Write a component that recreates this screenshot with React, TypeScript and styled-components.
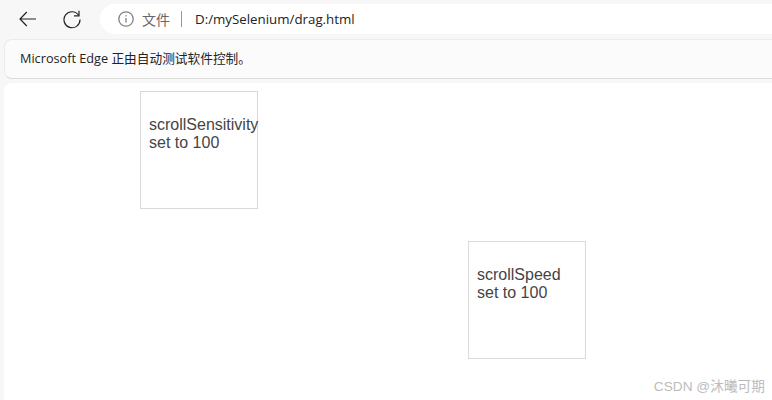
import styled, { createGlobalStyle } from 'styled-components';

const GlobalStyle = createGlobalStyle`
  html, body {
    margin: 0;
    padding: 0;
    height: 100%;
    overflow: hidden;
    background: #f7f7f7;
  }
`;

const Window = styled.div`
  width: 772px;
  height: 400px;
  display: flex;
  flex-direction: column;
  background: #f7f7f7;
  font-family: "Segoe UI", "Open Sans", "Noto Sans CJK SC", sans-serif;
`;

const Toolbar = styled.div`
  height: 38px;
  flex: none;
  display: flex;
  align-items: center;
  padding-left: 16px;
  box-sizing: border-box;
`;

const NavButton = styled.button`
  width: 24px;
  height: 24px;
  margin-right: 20px;
  padding: 0;
  border: 0;
  background: none;
  display: flex;
  align-items: center;
  justify-content: center;

  & + & {
    margin-right: 16px;
  }
`;

const AddressBar = styled.div`
  flex: 1;
  height: 30px;
  padding-left: 18px;
  display: flex;
  align-items: center;
  background: #fff;
  border-radius: 15px 0 0 15px;
  font-size: 14px;
`;

const Scheme = styled.span`
  margin-left: 8px;
  color: #666;
  font-family: "Noto Sans CJK SC", sans-serif;
`;

const Divider = styled.span`
  width: 1px;
  height: 16px;
  margin: 0 13px 0 11px;
  background: #999;
`;

const Url = styled.span`
  color: #222;
  font-size: 13.3px;
`;

const InfoBar = styled.div`
  height: 40px;
  flex: none;
  margin: 1px 0 0 4px;
  padding: 0 0 3px 15px;
  display: flex;
  align-items: center;
  background: #fbfbfb;
  border: 1px solid #ececec;
  border-right: 0;
  border-bottom-color: #dcdcdc;
  border-radius: 8px 0 0 8px;
  box-sizing: border-box;
  color: #222;
  font-size: 12.7px;
`;

const Page = styled.main`
  position: relative;
  flex: 1;
  margin: 4px 0 0 4px;
  background: #fff;
  border-radius: 8px 0 0 0;
`;

const DragBox = styled.div<{ $left: number; $top: number }>`
  position: absolute;
  left: ${(p) => p.$left}px;
  top: ${(p) => p.$top}px;
  width: 118px;
  height: 118px;
  padding: 24px 0 0 8px;
  box-sizing: border-box;
  border: 1px solid #d9d9d9;
  color: #444;
  font: 16px/18px "Liberation Sans", Arial, sans-serif;
  white-space: nowrap;
`;

const Watermark = styled.div`
  position: absolute;
  right: 7px;
  bottom: 5px;
  color: #bcbcbc;
  font: 13.7px/16px "Liberation Sans", "Noto Sans CJK SC", sans-serif;
`;

export default function App(): JSX.Element {
  return (
    <Window>
      <GlobalStyle />
      <Toolbar>
        <NavButton aria-label="back">
          <svg width="20" height="20" viewBox="0 0 20 20" fill="none" stroke="#222" strokeWidth="1.2">
            <path d="M18 10H2.5M8.8 3 2 10 8.8 17" />
          </svg>
        </NavButton>
        <NavButton aria-label="reload">
          <svg width="20" height="20" viewBox="0 0 20 20" fill="none" stroke="#222" strokeWidth="1.2">
            <path d="M16.6 6.2A8 8 0 1 0 18 10.5" />
            <path d="M17 1.8V6.8H12" />
          </svg>
        </NavButton>
        <AddressBar>
          <svg width="16" height="16" viewBox="0 0 16 16" fill="none" stroke="#808080" strokeWidth="1.3">
            <circle cx="8" cy="8" r="7.2" />
            <path d="M8 7v4.6M8 4.2v1.4" />
          </svg>
          <Scheme>文件</Scheme>
          <Divider />
          <Url>D:/mySelenium/drag.html</Url>
        </AddressBar>
      </Toolbar>
      <InfoBar>Microsoft Edge 正由自动测试软件控制。</InfoBar>
      <Page>
        <DragBox $left={136} $top={8}>
          scrollSensitivity
          <br />
          set to 100
        </DragBox>
        <DragBox $left={464} $top={158}>
          scrollSpeed
          <br />
          set to 100
        </DragBox>
        <Watermark>CSDN @沐曦可期</Watermark>
      </Page>
    </Window>
  );
}
